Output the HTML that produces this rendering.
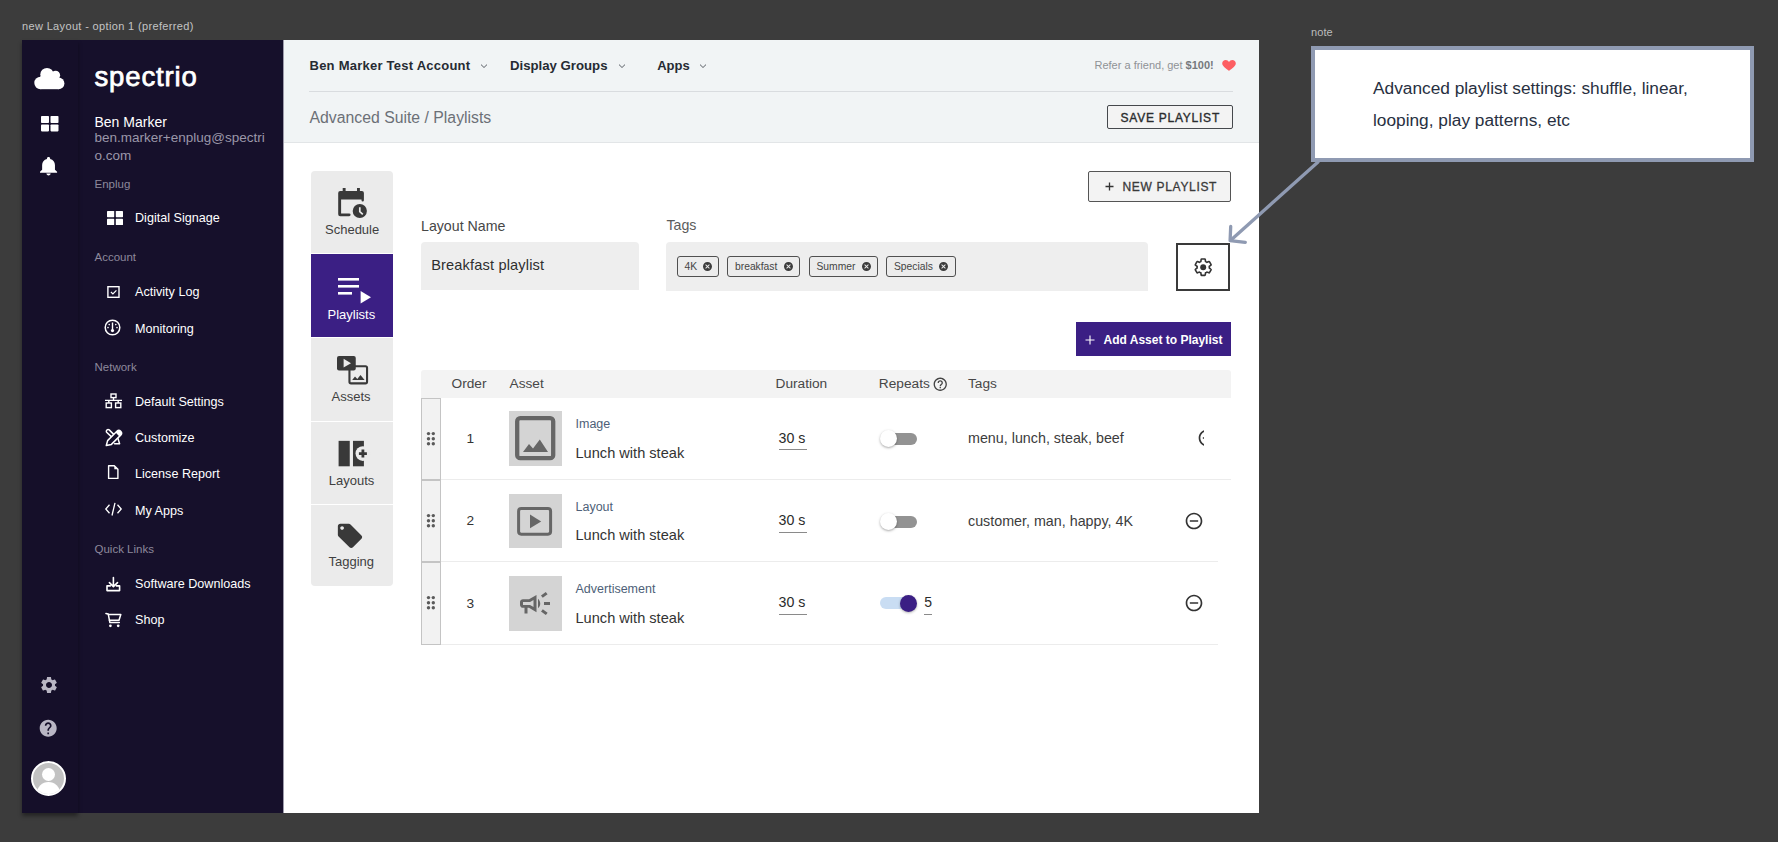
<!DOCTYPE html>
<html><head><meta charset="utf-8"><style>
html,body{margin:0;padding:0;}
body{width:1778px;height:842px;background:#3c3c3c;position:relative;overflow:hidden;font-family:"Liberation Sans", sans-serif;}
.t{position:absolute;white-space:nowrap;}
svg{overflow:visible;}
</style></head><body>
<div class="t" style="left:22px;top:21.00px;font-size:11px;line-height:11px;color:#c4c4c4;font-weight:400;letter-spacing:0.35px;">new Layout - option 1 (preferred)</div>
<div class="t" style="left:1311px;top:27.00px;font-size:11px;line-height:11px;color:#bdbdbd;font-weight:400;letter-spacing:0.1px;">note</div>
<div style="position:absolute;left:22px;top:40px;width:1237px;height:773px;background:#fff;"></div>
<div style="position:absolute;left:78px;top:40px;width:205px;height:773px;background:#16102b;"></div>
<div style="position:absolute;left:22px;top:40px;width:56px;height:773px;background:#150f29;box-shadow:0 3px 4px rgba(0,0,0,0.4);"></div>
<div style="position:absolute;left:283px;top:40px;width:976px;height:102px;background:#f1f4f5;border-bottom:1px solid #e2e5e7;"></div>
<div style="position:absolute;left:283px;top:40px;width:1px;height:773px;background:#9d9bab;"></div>
<svg style="position:absolute;left:30px;top:60px;" width="40" height="35" viewBox="30 60 40 35"><g fill="#fff"><circle cx="40.5" cy="83" r="6.2"/><circle cx="47" cy="74.6" r="6.7"/><circle cx="55.6" cy="75.2" r="4.5"/><circle cx="58.6" cy="83.4" r="5.8"/><rect x="40.5" y="76" width="18.1" height="13.2"/></g></svg>
<svg style="position:absolute;left:40.5px;top:115.8px;" width="17.5" height="15.4" viewBox="0 0 17.5 15.4"><g fill="#fff"><rect x="0" y="0" width="8" height="7" rx="0.8"/><rect x="9.5" y="0" width="8" height="7" rx="0.8"/><rect x="0" y="8.4" width="8" height="7" rx="0.8"/><rect x="9.5" y="8.4" width="8" height="7" rx="0.8"/></g></svg>
<svg style="position:absolute;left:39.8px;top:156.9px;" width="17.1" height="18.5" viewBox="4 2.5 16 19.5" preserveAspectRatio="none"><path fill="#fff" d="M12 22c1.1 0 2-.9 2-2h-4c0 1.1.89 2 2 2zm6-6v-5c0-3.07-1.64-5.64-4.5-6.32V4c0-.83-.67-1.5-1.5-1.5s-1.5.67-1.5 1.5v.68C7.630 5.36 6 7.92 6 11v5l-2 2v1h16v-1l-2-2z"/></svg>
<svg style="position:absolute;left:38.6px;top:675px;" width="20" height="20" viewBox="0 0 24 24"><path fill="#b9b6c4" d="M19.14 12.94c.04-.3.06-.61.06-.94 0-.32-.02-.64-.07-.94l2.03-1.58c.18-.14.23-.41.12-.61l-1.92-3.32c-.12-.22-.37-.29-.59-.22l-2.39.96c-.5-.38-1.03-.7-1.62-.94l-.36-2.54c-.04-.24-.24-.41-.48-.41h-3.840c-.24 0-.43.17-.47.41l-.36 2.54c-.59.24-1.13.57-1.62.94l-2.39-.96c-.22-.08-.47 0-.59.22L2.74 8.87c-.12.21-.08.47.12.61l2.03 1.58c-.05.3-.09.63-.09.94s.02.64.07.94l-2.03 1.58c-.18.14-.23.41-.12.61l1.92 3.32c.12.22.37.29.59.22l2.39-.96c.5.38 1.03.7 1.62.94l.36 2.54c.05.24.24.41.48.41h3.84c.24 0 .44-.17.47-.41l.36-2.54c.59-.24 1.13-.56 1.62-.94l2.39.96c.22.08.47 0 .59-.22l1.92-3.32c.12-.22.07-.47-.12-.61l-2.01-1.58zM12 15.6c-1.98 0-3.6-1.62-3.6-3.6s1.62-3.6 3.6-3.6 3.6 1.62 3.6 3.6-1.62 3.6-3.6 3.6z"/></svg>
<svg style="position:absolute;left:38.3px;top:717.8px;" width="20.4" height="20.4" viewBox="0 0 24 24"><path fill="#b9b6c4" d="M12 2C6.48 2 2 6.48 2 12s4.48 10 10 10 10-4.48 10-10S17.52 2 12 2zm1 17h-2v-2h2v2zm2.07-7.75l-.9.92C13.45 12.9 13 13.5 13 15h-2v-.5c0-1.1.45-2.1 1.17-2.83l1.24-1.26c.37-.36.59-.86.59-1.41 0-1.1-.9-2-2-2s-2 .9-2 2H8c0-2.21 1.79-4 4-4s4 1.79 4 4c0 .88-.36 1.68-.93 2.25z"/></svg>
<div style="position:absolute;left:31px;top:761px;width:31px;height:31px;border:2px solid #fff;border-radius:50%;background:#c2c2c2;overflow:hidden"><div style="position:absolute;left:8.8px;top:5px;width:13.4px;height:13.4px;border-radius:50%;background:#fff"></div><div style="position:absolute;left:4px;top:19px;width:23px;height:22px;border-radius:50%;background:#fff"></div></div>
<div class="t" style="left:94.5px;top:63.00px;font-size:27.5px;line-height:27.5px;color:#fff;font-weight:400;letter-spacing:0.85px;-webkit-text-stroke:0.75px #fff;">spectrio</div>
<div class="t" style="left:94.5px;top:115.00px;font-size:14px;line-height:14px;color:#ffffff;font-weight:400;letter-spacing:0px;">Ben Marker</div>
<div class="t" style="left:94.5px;top:131.00px;font-size:13.5px;line-height:13.5px;color:#9b97a9;font-weight:400;letter-spacing:0px;">ben.marker+enplug@spectri</div>
<div class="t" style="left:94.5px;top:149.00px;font-size:13.5px;line-height:13.5px;color:#9b97a9;font-weight:400;letter-spacing:0px;">o.com</div>
<div class="t" style="left:94.5px;top:179.00px;font-size:11.5px;line-height:11.5px;color:#8d899c;font-weight:400;letter-spacing:0px;">Enplug</div>
<div class="t" style="left:135px;top:212.00px;font-size:12.6px;line-height:12.6px;color:#ffffff;font-weight:400;letter-spacing:0px;">Digital Signage</div>
<div class="t" style="left:94.5px;top:252.00px;font-size:11.5px;line-height:11.5px;color:#8d899c;font-weight:400;letter-spacing:0px;">Account</div>
<div class="t" style="left:135px;top:286.00px;font-size:12.6px;line-height:12.6px;color:#ffffff;font-weight:400;letter-spacing:0px;">Activity Log</div>
<div class="t" style="left:135px;top:323.00px;font-size:12.6px;line-height:12.6px;color:#ffffff;font-weight:400;letter-spacing:0px;">Monitoring</div>
<div class="t" style="left:94.5px;top:362.00px;font-size:11.5px;line-height:11.5px;color:#8d899c;font-weight:400;letter-spacing:0px;">Network</div>
<div class="t" style="left:135px;top:396.00px;font-size:12.6px;line-height:12.6px;color:#ffffff;font-weight:400;letter-spacing:0px;">Default Settings</div>
<div class="t" style="left:135px;top:432.00px;font-size:12.6px;line-height:12.6px;color:#ffffff;font-weight:400;letter-spacing:0px;">Customize</div>
<div class="t" style="left:135px;top:468.00px;font-size:12.6px;line-height:12.6px;color:#ffffff;font-weight:400;letter-spacing:0px;">License Report</div>
<div class="t" style="left:135px;top:505.00px;font-size:12.6px;line-height:12.6px;color:#ffffff;font-weight:400;letter-spacing:0px;">My Apps</div>
<div class="t" style="left:94.5px;top:544.00px;font-size:11.5px;line-height:11.5px;color:#8d899c;font-weight:400;letter-spacing:0px;">Quick Links</div>
<div class="t" style="left:135px;top:578.00px;font-size:12.6px;line-height:12.6px;color:#ffffff;font-weight:400;letter-spacing:0px;">Software Downloads</div>
<div class="t" style="left:135px;top:614.00px;font-size:12.6px;line-height:12.6px;color:#ffffff;font-weight:400;letter-spacing:0px;">Shop</div>
<svg style="position:absolute;left:107px;top:211px;" width="16" height="14" viewBox="0 0 16 14"><g fill="#fff"><rect x="0" y="0" width="7.2" height="6.2" rx="0.6"/><rect x="8.8" y="0" width="7.2" height="6.2" rx="0.6"/><rect x="0" y="7.8" width="7.2" height="6.2" rx="0.6"/><rect x="8.8" y="7.8" width="7.2" height="6.2" rx="0.6"/></g></svg>
<svg style="position:absolute;left:106px;top:285px;" width="15" height="14" viewBox="0 0 15 14"><rect x="1.9" y="1.7" width="11.1" height="10.6" fill="none" stroke="#fff" stroke-width="1.4"/><path d="M4.9 7 L6.9 8.9 L10.4 5.4" fill="none" stroke="#fff" stroke-width="1.2"/></svg>
<svg style="position:absolute;left:104px;top:319px;" width="17" height="17" viewBox="0 0 17 17"><circle cx="8.5" cy="8.5" r="7.3" fill="none" stroke="#fff" stroke-width="1.5"/><path d="M8.5 3.5 L8.5 11" stroke="#fff" stroke-width="1.4"/><circle cx="8.5" cy="11.6" r="1.6" fill="#fff"/><circle cx="5.2" cy="5.6" r="0.8" fill="#fff"/><circle cx="11.8" cy="5.6" r="0.8" fill="#fff"/><circle cx="4" cy="8.6" r="0.8" fill="#fff"/><circle cx="13" cy="8.6" r="0.8" fill="#fff"/></svg>
<svg style="position:absolute;left:104px;top:392.7px;" width="19" height="16" viewBox="0 0 19 16"><g fill="none" stroke="#fff" stroke-width="1.4"><rect x="7" y="1" width="5" height="3.6"/><path d="M9.5 4.6V7.4M1 7.4H18M4.8 7.4V10M14.2 7.4V10"/><rect x="2.2" y="10" width="5.2" height="4.6"/><rect x="11.6" y="10" width="5.2" height="4.6"/></g></svg>
<svg style="position:absolute;left:102px;top:426px;" width="22" height="22" viewBox="0 0 22 22"><g fill="none" stroke="#fff" stroke-width="1.5" stroke-linecap="round" stroke-linejoin="round"><path d="M9.3 10.6 L4.6 6.3 A1.8 1.8 0 0 1 7.2 3.9 L11.7 8.4"/><path d="M16 12.6 L17.6 17.8 H12.6"/></g><path d="M5.6 14.6 L14.9 5.3 A2.65 2.65 0 0 1 18.7 9.1 L9.4 18.4 L4.3 19.5 Z" fill="#16102b" stroke="#fff" stroke-width="1.5" stroke-linejoin="round"/><path d="M14.9 5.3 A2.65 2.65 0 0 1 18.7 9.1 L17.4 10.4 L13.6 6.6 Z" fill="#fff"/></svg>
<svg style="position:absolute;left:107px;top:464px;" width="13" height="16" viewBox="0 0 13 16"><path d="M1.6 1.7 H7.3 L10.9 5.3 V14.4 H1.6 Z" fill="none" stroke="#fff" stroke-width="1.4" stroke-linejoin="round"/><path d="M7.3 1.7 L10.9 5.3 H7.3 Z" fill="#fff"/></svg>
<svg style="position:absolute;left:104px;top:501px;" width="19" height="16" viewBox="0 0 19 16"><g fill="none" stroke="#fff" stroke-width="1.3"><path d="M5.5 3.8 L1.8 8 L5.5 12.2"/><path d="M13.5 3.8 L17.2 8 L13.5 12.2"/><path d="M11 1.8 L8 14.5"/></g></svg>
<svg style="position:absolute;left:102px;top:572px;" width="22" height="22" viewBox="0 0 22 22"><g fill="none" stroke="#fff" stroke-width="1.6" stroke-linecap="round" stroke-linejoin="round"><path d="M11.4 5.6 V14.4 M7.4 10.6 L11.4 14.6 L15.5 10.6"/><path d="M8.3 13.9 H5 V18.6 H17.6 V13.9 H14.4"/></g></svg>
<svg style="position:absolute;left:102px;top:608px;" width="22" height="22" viewBox="0 0 22 22"><g fill="none" stroke="#fff" stroke-width="1.5" stroke-linecap="round" stroke-linejoin="round"><path d="M3.9 5.4 L6.2 5.9 L7.9 14.6 H17.3"/><path d="M6.4 6.5 H18.8 L17 12.3 H7.4"/></g><circle cx="8.4" cy="17.8" r="1.35" fill="#fff"/><circle cx="16.2" cy="17.8" r="1.35" fill="#fff"/></svg>
<div class="t" style="left:309.5px;top:59.00px;font-size:13px;line-height:13px;color:#262b33;font-weight:700;letter-spacing:0.24px;">Ben Marker Test Account</div>
<div class="t" style="left:510px;top:59.00px;font-size:13.2px;line-height:13.2px;color:#262b33;font-weight:700;letter-spacing:0px;">Display Groups</div>
<div class="t" style="left:657.2px;top:59.00px;font-size:13px;line-height:13px;color:#262b33;font-weight:700;letter-spacing:0px;">Apps</div>
<svg style="position:absolute;left:480px;top:62.9px;" width="8" height="6" viewBox="0 0 8 6"><path d="M1 1.6 L4 4.5 L7 1.6" fill="none" stroke="#50555c" stroke-width="0.95"/></svg>
<svg style="position:absolute;left:617.5px;top:62.9px;" width="8" height="6" viewBox="0 0 8 6"><path d="M1 1.6 L4 4.5 L7 1.6" fill="none" stroke="#50555c" stroke-width="0.95"/></svg>
<svg style="position:absolute;left:698.8px;top:62.9px;" width="8" height="6" viewBox="0 0 8 6"><path d="M1 1.6 L4 4.5 L7 1.6" fill="none" stroke="#50555c" stroke-width="0.95"/></svg>
<div style="position:absolute;left:309px;top:91px;width:924px;height:1px;background:#d9dcdf;"></div>
<div class="t" style="left:309.5px;top:110.00px;font-size:15.8px;line-height:15.8px;color:#6c7077;font-weight:400;letter-spacing:0px;">Advanced Suite / Playlists</div>
<div class="t" style="left:1094.5px;top:60.00px;font-size:11px;line-height:11px;color:#8f9296;font-weight:400;letter-spacing:0px;">Refer a friend, get <b style="color:#76797d">$100!</b></div>
<svg style="position:absolute;left:1221.9px;top:60.1px;" width="14" height="11" viewBox="0 0 14 11"><path fill="#fd5e62" d="M7 10.8 C6.2 10.2 0.2 6.6 0.2 3.5 C0.2 1.5 1.8 0 3.7 0 C5.1 0 6.3 0.8 7 2 C7.7 0.8 8.9 0 10.3 0 C12.2 0 13.8 1.5 13.8 3.5 C13.8 6.6 7.8 10.2 7 10.8 Z"/></svg>
<div style="position:absolute;left:1107px;top:105.4px;width:124px;height:22px;border:1px solid #45484c;border-radius:2px;background:#f3f3f3;box-sizing:content-box"></div>
<div class="t" style="left:1120.5px;top:112.00px;font-size:12px;line-height:12px;color:#2a2c2e;font-weight:400;letter-spacing:0.76px;-webkit-text-stroke:0.35px #2a2c2e;">SAVE PLAYLIST</div>
<div style="position:absolute;left:311px;top:171px;width:82px;height:82px;background:#ebebeb;border-radius:4px 4px 0 0;"></div>
<div style="position:absolute;left:311px;top:254px;width:82px;height:82.5px;background:#3b1f84;"></div>
<div style="position:absolute;left:311px;top:338px;width:82px;height:82.5px;background:#ebebeb;"></div>
<div style="position:absolute;left:311px;top:421.5px;width:82px;height:82.2px;background:#ebebeb;"></div>
<div style="position:absolute;left:311px;top:504.7px;width:82px;height:81.3px;background:#ebebeb;border-radius:0 0 4px 4px;"></div>
<svg style="position:absolute;left:333px;top:183px;" width="40" height="40" viewBox="0 0 40 40"><g fill="#393939"><rect x="9.7" y="5" width="2.9" height="4"/><rect x="24" y="5" width="2.9" height="4"/><path d="M7.2 8.1 H28.9 Q30.9 8.1 30.9 10.1 V17.3 Q30.9 18.5 29.7 18.5 Q28.5 18.5 28.5 17.3 V16.6 H8.1 V30.4 H16.1 Q17.6 30.4 17.6 31.85 Q17.6 33.3 16.1 33.3 H7.2 Q5.2 33.3 5.2 31.3 V10.1 Q5.2 8.1 7.2 8.1 Z"/><circle cx="26.8" cy="28" r="7.1"/></g><path d="M26.8 24.2 V28.6 L29.8 31.3" stroke="#ebebeb" stroke-width="1.7" fill="none"/></svg>
<div class="t" style="left:325px;top:223.00px;font-size:13px;line-height:13px;color:#3f3f3f;font-weight:400;letter-spacing:0px;">Schedule</div>
<svg style="position:absolute;left:338px;top:278px;" width="34" height="26" viewBox="0 0 34 26"><g fill="#fff"><rect x="0" y="0" width="21" height="2.6"/><rect x="0" y="7" width="21" height="2.6"/><rect x="0" y="14" width="14" height="2.6"/><path d="M22.6 13 L33 19.2 L22.6 25.6 Z"/></g></svg>
<div class="t" style="left:327.5px;top:308.00px;font-size:13px;line-height:13px;color:#ffffff;font-weight:400;letter-spacing:0px;">Playlists</div>
<svg style="position:absolute;left:332px;top:350px;" width="40" height="40" viewBox="0 0 40 40"><rect x="17.45" y="16.25" width="17.6" height="17.1" rx="1.6" fill="none" stroke="#393939" stroke-width="2.1"/><path d="M20.2 29.9 L23 26.6 L25.3 29.1 L28.5 25 L32.6 29.9 Z" fill="#393939"/><rect x="5" y="5.9" width="18.75" height="14.5" rx="2" fill="#393939"/><path d="M11.6 8.8 L19 13.2 L11.6 17.4 Z" fill="#ebebeb"/></svg>
<div class="t" style="left:331.5px;top:390.00px;font-size:13px;line-height:13px;color:#3f3f3f;font-weight:400;letter-spacing:0px;">Assets</div>
<svg style="position:absolute;left:338px;top:440px;" width="30" height="27" viewBox="0 0 30 27"><rect x="0.6" y="0.85" width="11.15" height="25.45" fill="#393939"/><rect x="14.98" y="0.85" width="10.92" height="25.45" fill="#393939"/><circle cx="24.9" cy="13.6" r="7.4" fill="#ebebeb"/><path d="M24.9 9.6 V17.6 M20.9 13.6 H28.9" stroke="#393939" stroke-width="2.8"/></svg>
<div class="t" style="left:328.8px;top:474.00px;font-size:13px;line-height:13px;color:#3f3f3f;font-weight:400;letter-spacing:0px;">Layouts</div>
<svg style="position:absolute;left:336.5px;top:522.5px;" width="27" height="27" viewBox="0 0 24 24"><path fill="#393939" transform="translate(-1.4,-1.5) scale(1.08)" d="M21.41 11.58l-9-9C12.05 2.22 11.55 2 11 2H4c-1.1 0-2 .9-2 2v7c0 .55.22 1.05.59 1.42l9 9c.36.36.86.58 1.41.58.55 0 1.05-.22 1.41-.59l7-7c.37-.36.59-.86.59-1.41 0-.55-.23-1.06-.59-1.420zM5.5 7C4.67 7 4 6.33 4 5.5S4.67 4 5.5 4 7 4.67 7 5.5 6.33 7 5.5 7z"/></svg>
<div class="t" style="left:328.5px;top:555.00px;font-size:13px;line-height:13px;color:#3f3f3f;font-weight:400;letter-spacing:0px;">Tagging</div>
<div class="t" style="left:421px;top:219.00px;font-size:14.2px;line-height:14.2px;color:#474747;font-weight:400;letter-spacing:0px;">Layout Name</div>
<div style="position:absolute;left:421px;top:242px;width:218px;height:48px;background:#eeeeee;border-radius:4px 4px 0 0;"></div>
<div class="t" style="left:431.2px;top:258.00px;font-size:14.6px;line-height:14.6px;color:#2e2e2e;font-weight:400;letter-spacing:0.15px;">Breakfast playlist</div>
<div class="t" style="left:666.5px;top:218.00px;font-size:14.2px;line-height:14.2px;color:#5c5c5c;font-weight:400;letter-spacing:0px;">Tags</div>
<div style="position:absolute;left:666px;top:242px;width:482px;height:49px;background:#eeeeee;border-radius:4px 4px 0 0;"></div>
<div style="position:absolute;left:676.5px;top:256px;width:40.5px;height:19px;border:1px solid #505050;border-radius:3px;background:#ececec"></div>
<div class="t" style="left:684.5px;top:262.00px;font-size:10.3px;line-height:10.3px;color:#444;font-weight:400;letter-spacing:0px;">4K</div>
<svg style="position:absolute;left:702.5px;top:261.9px;" width="9" height="9" viewBox="0 0 24 24"><path fill="#3c3c3c" d="M12 2C6.47 2 2 6.47 2 12s4.47 10 10 10 10-4.47 10-10S17.53 2 12 2zm5 13.59L15.59 17 12 13.41 8.41 17 7 15.59 10.59 12 7 8.41 8.41 7 12 10.59 15.59 7 17 8.410 13.41 12 17 15.59z" transform="translate(-2.4,-2.4) scale(1.2)"/></svg>
<div style="position:absolute;left:727px;top:256px;width:71px;height:19px;border:1px solid #505050;border-radius:3px;background:#ececec"></div>
<div class="t" style="left:735px;top:262.00px;font-size:10.3px;line-height:10.3px;color:#444;font-weight:400;letter-spacing:0px;">breakfast</div>
<svg style="position:absolute;left:783.5px;top:261.9px;" width="9" height="9" viewBox="0 0 24 24"><path fill="#3c3c3c" d="M12 2C6.47 2 2 6.47 2 12s4.47 10 10 10 10-4.47 10-10S17.53 2 12 2zm5 13.59L15.59 17 12 13.41 8.41 17 7 15.59 10.59 12 7 8.41 8.41 7 12 10.59 15.59 7 17 8.410 13.41 12 17 15.59z" transform="translate(-2.4,-2.4) scale(1.2)"/></svg>
<div style="position:absolute;left:808.5px;top:256px;width:67.5px;height:19px;border:1px solid #505050;border-radius:3px;background:#ececec"></div>
<div class="t" style="left:816.5px;top:262.00px;font-size:10.3px;line-height:10.3px;color:#444;font-weight:400;letter-spacing:0px;">Summer</div>
<svg style="position:absolute;left:861.5px;top:261.9px;" width="9" height="9" viewBox="0 0 24 24"><path fill="#3c3c3c" d="M12 2C6.47 2 2 6.47 2 12s4.47 10 10 10 10-4.47 10-10S17.53 2 12 2zm5 13.59L15.59 17 12 13.41 8.41 17 7 15.59 10.59 12 7 8.41 8.41 7 12 10.59 15.59 7 17 8.410 13.41 12 17 15.59z" transform="translate(-2.4,-2.4) scale(1.2)"/></svg>
<div style="position:absolute;left:886px;top:256px;width:67.5px;height:19px;border:1px solid #505050;border-radius:3px;background:#ececec"></div>
<div class="t" style="left:894px;top:262.00px;font-size:10.3px;line-height:10.3px;color:#444;font-weight:400;letter-spacing:0px;">Specials</div>
<svg style="position:absolute;left:939.0px;top:261.9px;" width="9" height="9" viewBox="0 0 24 24"><path fill="#3c3c3c" d="M12 2C6.47 2 2 6.47 2 12s4.47 10 10 10 10-4.47 10-10S17.53 2 12 2zm5 13.59L15.59 17 12 13.41 8.41 17 7 15.59 10.59 12 7 8.41 8.41 7 12 10.59 15.59 7 17 8.410 13.41 12 17 15.59z" transform="translate(-2.4,-2.4) scale(1.2)"/></svg>
<div style="position:absolute;left:1176px;top:242.8px;width:50.2px;height:44.4px;border:2px solid #3a3a3a;background:#fff;box-sizing:content-box"></div>
<svg style="position:absolute;left:1192.8px;top:256.8px;" width="20.4" height="20.4" viewBox="0 0 24 24"><path fill="none" stroke="#333" stroke-width="1.9" d="M19.14 12.94c.04-.3.06-.61.06-.94 0-.32-.02-.64-.07-.94l2.03-1.58c.18-.14.23-.41.12-.61l-1.92-3.32c-.12-.22-.37-.29-.59-.22l-2.39.96c-.5-.38-1.03-.7-1.62-.94l-.36-2.54c-.04-.24-.24-.41-.48-.41h-3.84c-.24 0-.43.17-.47.41l-.36 2.54c-.59.24-1.13.57-1.62.94l-2.39-.96c-.22-.08-.47 0-.59.22L2.74 8.87c-.12.21-.08.47.12.61l2.03 1.58c-.05.3-.09.63-.09.94s.02.64.07.94l-2.03 1.58c-.18.14-.23.41-.12.61l1.92 3.32c.12.22.37.29.59.22l2.39-.96c.5.38 1.03.7 1.62.94l.36 2.54c.05.24.24.41.48.41h3.84c.24 0 .44-.17.47-.41l.36-2.54c.59-.24 1.13-.56 1.62-.94l2.39.96c.22.08.47 0 .59-.22l1.92-3.32c.12-.22.07-.47-.12-.61l-2.01-1.58z"/><circle cx="12" cy="12" r="3.5" fill="#333"/></svg>
<div style="position:absolute;left:1088px;top:171px;width:141px;height:29px;border:1px solid #555;border-radius:2px;background:#f3f3f3;box-sizing:content-box"></div>
<svg style="position:absolute;left:1104.5px;top:181.5px;" width="9" height="9" viewBox="0 0 9 9"><path d="M4.5 0.5V8.5M0.5 4.5H8.5" stroke="#333" stroke-width="1.3"/></svg>
<div class="t" style="left:1122.5px;top:181.00px;font-size:12px;line-height:12px;color:#3a3a3a;font-weight:400;letter-spacing:0.68px;-webkit-text-stroke:0.3px #3a3a3a;">NEW PLAYLIST</div>
<div style="position:absolute;left:1076px;top:322px;width:154.5px;height:34px;background:#3b1f84;"></div>
<svg style="position:absolute;left:1084.5px;top:334.5px;" width="10" height="10" viewBox="0 0 10 10"><path d="M5 0.5V9.5M0.5 5H9.5" stroke="#fff" stroke-width="1.1"/></svg>
<div class="t" style="left:1103.5px;top:334.00px;font-size:12px;line-height:12px;color:#fff;font-weight:700;letter-spacing:0.0px;">Add Asset to Playlist</div>
<div style="position:absolute;left:421px;top:370px;width:809.5px;height:27.5px;background:#f3f3f3;border-radius:3px 3px 0 0;"></div>
<div class="t" style="left:451.5px;top:377.00px;font-size:13.7px;line-height:13.7px;color:#474747;font-weight:400;letter-spacing:0px;">Order</div>
<div class="t" style="left:509.5px;top:377.00px;font-size:13.7px;line-height:13.7px;color:#474747;font-weight:400;letter-spacing:0px;">Asset</div>
<div class="t" style="left:775.5px;top:377.00px;font-size:13.7px;line-height:13.7px;color:#474747;font-weight:400;letter-spacing:0px;">Duration</div>
<div class="t" style="left:878.8px;top:377.00px;font-size:13.7px;line-height:13.7px;color:#474747;font-weight:400;letter-spacing:0px;">Repeats</div>
<svg style="position:absolute;left:932.8px;top:376.8px;" width="14.5" height="14.5" viewBox="0 0 24 24"><path fill="#444" d="M11 18h2v-2h-2v2zm1-16C6.48 2 2 6.48 2 12s4.48 10 10 10 10-4.48 10-10S17.52 2 12 2zm0 18c-4.41 0-8-3.590-8-8s3.59-8 8-8 8 3.59 8 8-3.59 8-8 8zm0-14c-2.21 0-4 1.79-4 4h2c0-1.1.9-2 2-2s2 .9 2 2c0 2-3 1.75-3 5h2c0-2.25 3-2.5 3-5 0-2.21-1.79-4-4-4z" transform="translate(-1.2,-1.2) scale(1.1)"/></svg>
<div class="t" style="left:968px;top:377.00px;font-size:13.7px;line-height:13.7px;color:#474747;font-weight:400;letter-spacing:0px;">Tags</div>
<div style="position:absolute;left:421px;top:397.5px;width:18px;height:80.4px;border:1px solid #c4c4c4;background:#f2f2f2;box-sizing:content-box"></div>
<svg style="position:absolute;left:425px;top:430.5px;" width="12" height="16" viewBox="0 0 12 16"><g fill="#5a5a5a"><circle cx="3.5" cy="2.6" r="1.7"/><circle cx="8.3" cy="2.6" r="1.7"/><circle cx="3.5" cy="7.7" r="1.7"/><circle cx="8.3" cy="7.7" r="1.7"/><circle cx="3.5" cy="12.8" r="1.7"/><circle cx="8.3" cy="12.8" r="1.7"/></g></svg>
<div style="position:absolute;left:441px;top:478.9px;width:789.5px;height:1px;background:#ececec;"></div>
<div class="t" style="left:466.5px;top:432.00px;font-size:13.7px;line-height:13.7px;color:#333;font-weight:400;letter-spacing:0px;">1</div>
<div style="position:absolute;left:508.5px;top:411.3px;width:53.5px;height:54.7px;background:#d4d4d4;"></div>
<svg style="position:absolute;left:515.0px;top:415.5px;" width="41" height="45" viewBox="0 0 41 45"><rect x="2.2" y="2.2" width="36" height="40" rx="3" fill="none" stroke="#666" stroke-width="4.3"/><path d="M8 36 L14 28 L18 32.5 L24.8 23.5 L33 36 Z" fill="#666"/></svg>
<div class="t" style="left:575.5px;top:418.00px;font-size:12.5px;line-height:12.5px;color:#4e5f78;font-weight:400;letter-spacing:0px;">Image</div>
<div class="t" style="left:575.5px;top:446.00px;font-size:14.6px;line-height:14.6px;color:#333;font-weight:400;letter-spacing:0.0px;">Lunch with steak</div>
<div class="t" style="left:778.5px;top:431.00px;font-size:14.2px;line-height:14.2px;color:#2b2b2b;font-weight:400;letter-spacing:0px;">30 s</div>
<div style="position:absolute;left:779px;top:449.1px;width:27.5px;height:1px;background:#8a8a8a;"></div>
<div style="position:absolute;left:888px;top:433.0px;width:29px;height:12px;background:#939393;border-radius:6px;"></div>
<div style="position:absolute;left:880.2px;top:430.0px;width:17px;height:17px;background:#fff;border-radius:50%;box-shadow:0 1px 2.5px rgba(0,0,0,0.35);"></div>
<div class="t" style="left:968px;top:431.00px;font-size:14.3px;line-height:14.3px;color:#3c3c3c;font-weight:400;letter-spacing:0px;">menu, lunch, steak, beef</div>
<div style="position:absolute;left:1196.5px;top:428.3px;width:7.5px;height:20px;overflow:hidden"><svg style="position:absolute;left:0px;top:0" width="20" height="20" viewBox="0 0 24 24"><path fill="#333" d="M7 11v2h10v-2H7zm5-9C6.48 2 2 6.48 2 12s4.48 10 10 10 10-4.48 10-10S17.52 2 12 2zm0 18c-4.41 0-8-3.59-8-8s3.59-8 8-8 8 3.59 8 8-3.59 8-8 8z"/></svg></div>
<div style="position:absolute;left:421px;top:480px;width:18px;height:80.4px;border:1px solid #c4c4c4;background:#f2f2f2;box-sizing:content-box"></div>
<svg style="position:absolute;left:425px;top:513px;" width="12" height="16" viewBox="0 0 12 16"><g fill="#5a5a5a"><circle cx="3.5" cy="2.6" r="1.7"/><circle cx="8.3" cy="2.6" r="1.7"/><circle cx="3.5" cy="7.7" r="1.7"/><circle cx="8.3" cy="7.7" r="1.7"/><circle cx="3.5" cy="12.8" r="1.7"/><circle cx="8.3" cy="12.8" r="1.7"/></g></svg>
<div style="position:absolute;left:441px;top:561.4px;width:776.5px;height:1px;background:#ececec;"></div>
<div class="t" style="left:466.5px;top:514.00px;font-size:13.7px;line-height:13.7px;color:#333;font-weight:400;letter-spacing:0px;">2</div>
<div style="position:absolute;left:508.5px;top:493.8px;width:53.5px;height:54.7px;background:#d4d4d4;"></div>
<svg style="position:absolute;left:517.3px;top:506.6px;" width="36" height="30" viewBox="0 0 36 30"><rect x="1.6" y="1.6" width="32" height="25.6" rx="2.6" fill="none" stroke="#666" stroke-width="3"/><path d="M13 7.6 L24.2 14.4 L13 21.2 Z" fill="#666"/></svg>
<div class="t" style="left:575.5px;top:501.00px;font-size:12.5px;line-height:12.5px;color:#4e5f78;font-weight:400;letter-spacing:0px;">Layout</div>
<div class="t" style="left:575.5px;top:528.00px;font-size:14.6px;line-height:14.6px;color:#333;font-weight:400;letter-spacing:0.0px;">Lunch with steak</div>
<div class="t" style="left:778.5px;top:513.00px;font-size:14.2px;line-height:14.2px;color:#2b2b2b;font-weight:400;letter-spacing:0px;">30 s</div>
<div style="position:absolute;left:779px;top:531.6px;width:27.5px;height:1px;background:#8a8a8a;"></div>
<div style="position:absolute;left:888px;top:515.5px;width:29px;height:12px;background:#939393;border-radius:6px;"></div>
<div style="position:absolute;left:880.2px;top:512.5px;width:17px;height:17px;background:#fff;border-radius:50%;box-shadow:0 1px 2.5px rgba(0,0,0,0.35);"></div>
<div class="t" style="left:968px;top:514.00px;font-size:14.3px;line-height:14.3px;color:#3c3c3c;font-weight:400;letter-spacing:0px;">customer, man, happy, 4K</div>
<svg style="position:absolute;left:1183.5px;top:510.8px;" width="20" height="20" viewBox="0 0 24 24"><path fill="#333" d="M7 11v2h10v-2H7zm5-9C6.48 2 2 6.48 2 12s4.48 10 10 10 10-4.48 10-10S17.52 2 12 2zm0 18c-4.41 0-8-3.59-8-8s3.59-8 8-8 8 3.59 8 8-3.59 8-8 8z"/></svg>
<div style="position:absolute;left:421px;top:562.4px;width:18px;height:80.4px;border:1px solid #c4c4c4;background:#f2f2f2;box-sizing:content-box"></div>
<svg style="position:absolute;left:425px;top:595.4px;" width="12" height="16" viewBox="0 0 12 16"><g fill="#5a5a5a"><circle cx="3.5" cy="2.6" r="1.7"/><circle cx="8.3" cy="2.6" r="1.7"/><circle cx="3.5" cy="7.7" r="1.7"/><circle cx="8.3" cy="7.7" r="1.7"/><circle cx="3.5" cy="12.8" r="1.7"/><circle cx="8.3" cy="12.8" r="1.7"/></g></svg>
<div style="position:absolute;left:441px;top:643.8px;width:776.5px;height:1px;background:#ececec;"></div>
<div class="t" style="left:466.5px;top:597.00px;font-size:13.7px;line-height:13.7px;color:#333;font-weight:400;letter-spacing:0px;">3</div>
<div style="position:absolute;left:508.5px;top:576.1999999999999px;width:53.5px;height:54.7px;background:#d4d4d4;"></div>
<svg style="position:absolute;left:520px;top:591.6px;" width="30" height="23" viewBox="2 4 20 16" preserveAspectRatio="none"><path fill="#666" d="M18 11v2h4v-2h-4zm-2 6.61c.96.71 2.21 1.65 3.2 2.39.4-.53.8-1.07 1.2-1.6-.99-.74-2.240-1.68-3.2-2.4-.4.54-.8 1.08-1.2 1.61zM20.4 5.6c-.4-.53-.8-1.07-1.2-1.6-.99.74-2.24 1.68-3.2 2.4.4.53.8 1.07 1.2 1.6.96-.72 2.21-1.65 3.2-2.4zM4 9c-1.1 0-2 .9-2 2v2c0 1.1.9 2 2 2h1v4h2v-4h1l5 3V6L8 9H4zm5.03 1.71L11 9.53v4.94l-1.97-1.18-.48-.29H4v-2h4.55l.48-.29zM15.5 12c0-1.33-.58-2.53-1.5-3.35v6.69c.92-.81 1.5-2.01 1.5-3.34z"/></svg>
<div class="t" style="left:575.5px;top:583.00px;font-size:12.5px;line-height:12.5px;color:#4e5f78;font-weight:400;letter-spacing:0px;">Advertisement</div>
<div class="t" style="left:575.5px;top:611.00px;font-size:14.6px;line-height:14.6px;color:#333;font-weight:400;letter-spacing:0.0px;">Lunch with steak</div>
<div class="t" style="left:778.5px;top:595.00px;font-size:14.2px;line-height:14.2px;color:#2b2b2b;font-weight:400;letter-spacing:0px;">30 s</div>
<div style="position:absolute;left:779px;top:614.0px;width:27.5px;height:1px;background:#8a8a8a;"></div>
<div style="position:absolute;left:880px;top:596.9px;width:30px;height:12.2px;background:#c9ddf3;border-radius:6px;"></div>
<div style="position:absolute;left:900px;top:594.6px;width:17px;height:17px;background:#3b1f84;border-radius:50%;box-shadow:0 1px 2.5px rgba(0,0,0,0.3);"></div>
<div class="t" style="left:924.2px;top:595.00px;font-size:14px;line-height:14px;color:#2b2b2b;font-weight:400;letter-spacing:0px;">5</div>
<div style="position:absolute;left:924px;top:614.1px;width:8px;height:1px;background:#8a8a8a;"></div>
<svg style="position:absolute;left:1183.5px;top:593.1999999999999px;" width="20" height="20" viewBox="0 0 24 24"><path fill="#333" d="M7 11v2h10v-2H7zm5-9C6.48 2 2 6.48 2 12s4.48 10 10 10 10-4.48 10-10S17.52 2 12 2zm0 18c-4.41 0-8-3.59-8-8s3.59-8 8-8 8 3.59 8 8-3.59 8-8 8z"/></svg>
<div style="position:absolute;left:1311px;top:46px;width:435px;height:108px;border:4.3px solid #8f9ab2;background:#fff;box-sizing:content-box"></div>
<div class="t" style="left:1373px;top:80.00px;font-size:17.3px;line-height:17.3px;color:#283041;font-weight:400;letter-spacing:0px;">Advanced playlist settings: shuffle, linear,</div>
<div class="t" style="left:1373px;top:112.00px;font-size:17.3px;line-height:17.3px;color:#283041;font-weight:400;letter-spacing:0px;">looping, play patterns, etc</div>
<svg style="position:absolute;left:1220px;top:155px;" width="110" height="95" viewBox="1220 155 110 95"><g stroke="#8f9ab2" stroke-width="3.3" fill="none" stroke-linecap="round" stroke-linejoin="round"><path d="M1318 162 L1231 240"/><path d="M1230.7 226.5 L1230.1 240.6 L1245.3 242.4"/></g></svg>
</body></html>
